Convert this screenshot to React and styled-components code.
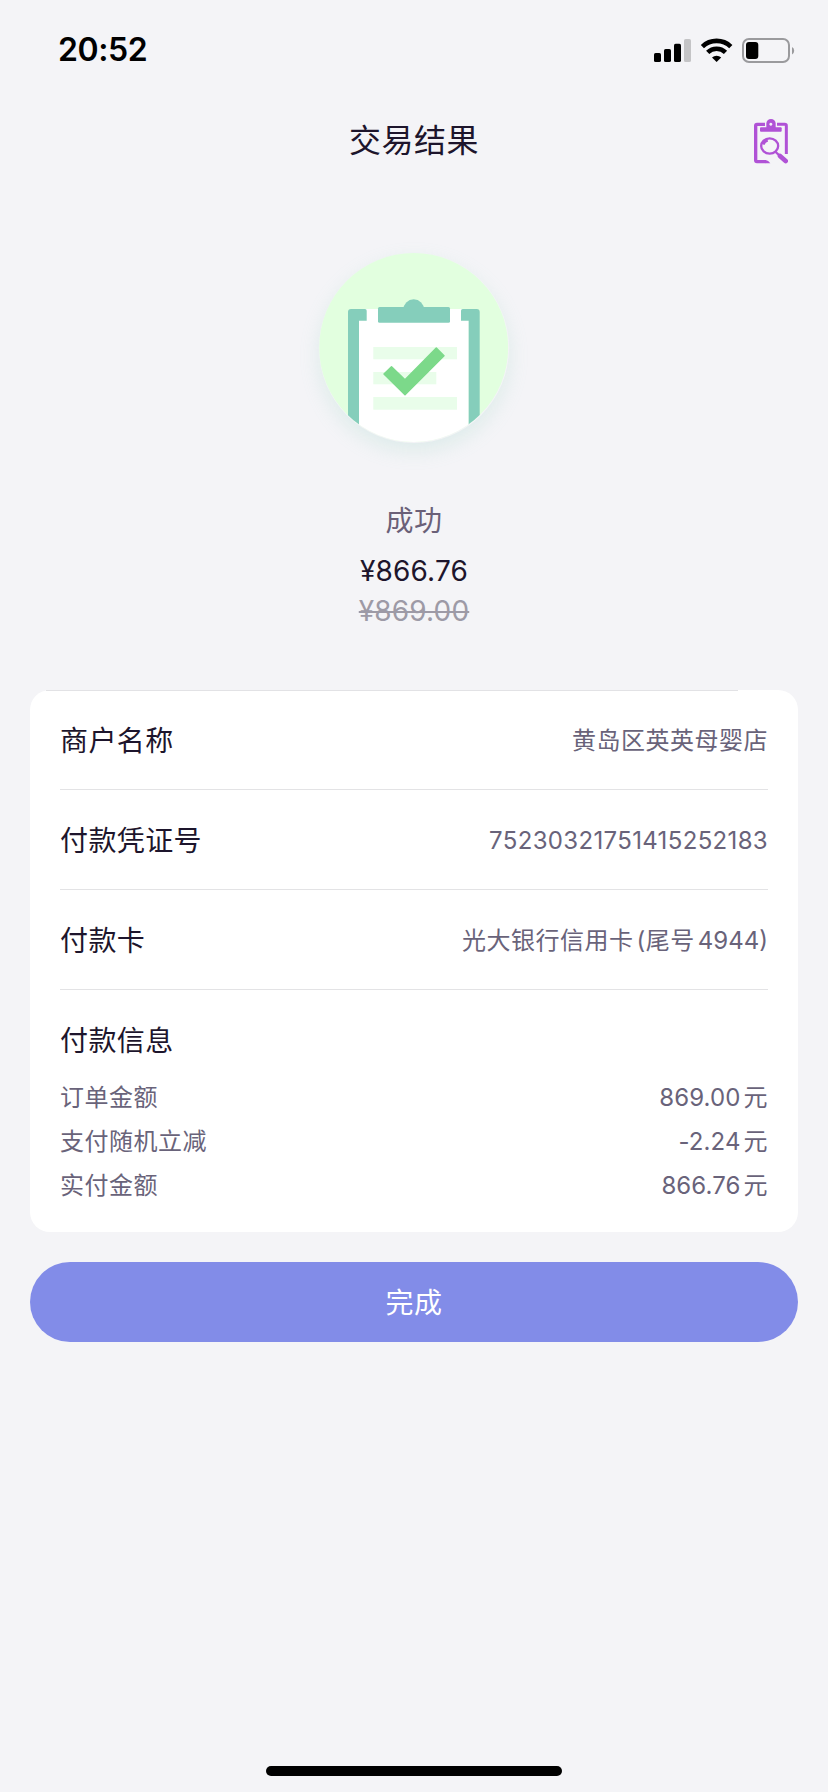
/* eslint-disable react/prop-types */
import styled, { createGlobalStyle } from 'styled-components';

const GlobalStyle = createGlobalStyle`
    body {
        margin: 0;
        background: #f4f4f7;
        font-family: Inter, "Noto Sans CJK SC", sans-serif;
        color: #1d152c;
    }
`;

const Page = styled.div`
    display: flex;
    flex-direction: column;
    width: 828px;
    height: 1792px;
    box-sizing: border-box;
    overflow: hidden;
`;

const StatusBar = styled.header`
    display: flex;
    align-items: center;
    justify-content: space-between;
    height: 99px;
    padding: 0 33px 0 58px;
`;

const Time = styled.span`
    font-size: 32px;
    font-weight: 600;
    line-height: 40px;
    letter-spacing: -0.4px;
    color: #000;
`;

const TitleBar = styled.div`
    display: grid;
    grid-template-columns: 34px 1fr 34px;
    align-items: center;
    height: 84px;
    padding: 0 40px;
`;

const Title = styled.h1`
    grid-column: 2;
    margin: 0;
    font-size: 32px;
    font-weight: 400;
    line-height: 44px;
    letter-spacing: 0.5px;
    text-align: center;
`;

const Summary = styled.section`
    display: flex;
    flex-direction: column;
    align-items: center;
    height: 507px;
`;

const Badge = styled.div`
    width: 190px;
    height: 190px;
    margin-top: 70px;
    border-radius: 50%;
    box-shadow: 0 8px 20px rgba(133, 206, 187, 0.2);
`;

const Status = styled.div`
    margin-top: 58px;
    font-size: 28px;
    line-height: 40px;
    letter-spacing: 0.4px;
    color: #6a6078;
`;

const Amount = styled.div`
    margin-top: ${({ $old }) => ($old ? '0' : '10px')};
    font-size: 28px;
    line-height: 40px;
    letter-spacing: 0.15px;
    ${({ $old }) => $old && `
        color: #9d9aa6;
        text-decoration: line-through;
        text-decoration-thickness: 2px;
    `}
`;

const Card = styled.section`
    position: relative;
    margin: 0 30px;
    height: 542px;
    box-sizing: border-box;
    padding: 0 30px;
    border-radius: 20px;
    background: #fff;
    &::before {
        content: '';
        position: absolute;
        top: 0;
        left: 16px;
        width: 692px;
        height: 1px;
        background: #e2e2e5;
    }
`;

const Row = styled.div`
    display: flex;
    align-items: center;
    justify-content: space-between;
    height: 100px;
    box-sizing: border-box;
    padding-top: 2px;
    ${({ $line }) => $line && 'border-bottom: 1px solid #e3e3e5;'}
`;

const Label = styled.span`
    font-size: 28px;
    line-height: 40px;
    letter-spacing: 0.4px;
`;

const Value = styled.span`
    display: flex;
    gap: 3px;
    font-size: 24px;
    line-height: 34px;
    color: #69637a;
`;

const Part = styled.span`
    letter-spacing: ${({ $spacing }) => $spacing || '0.5px'};
`;

const Detail = styled.div`
    display: flex;
    align-items: center;
    justify-content: space-between;
    height: 44px;
`;

const DetailLabel = styled.span`
    font-size: 24px;
    line-height: 34px;
    letter-spacing: 0.5px;
    color: #69637a;
`;

const Details = styled.div`
    margin-top: -14px;
`;

const DoneButton = styled.button`
    height: 80px;
    margin: 30px 30px 0;
    padding: 0 0 2px;
    border: 0;
    border-radius: 40px;
    background: #828ce8;
    font-family: inherit;
    font-size: 28px;
    letter-spacing: 0.4px;
    color: #fff;
    cursor: pointer;
`;

const HomeBar = styled.div`
    width: 296px;
    height: 10px;
    margin: auto auto 16px;
    border-radius: 5px;
    background: #000;
`;

const rows = [
    { label: '商户名称', value: [{ text: '黄岛区英英母婴店' }] },
    { label: '付款凭证号', value: [{ text: '75230321751415252183', spacing: '0.34px' }] },
    {
        label: '付款卡',
        value: [
            { text: '光大银行信用卡' },
            { text: '(尾号' },
            { text: '4944)', spacing: '0' }
        ]
    }
];

const details = [
    { label: '订单金额', value: '869.00' },
    { label: '支付随机立减', value: '-2.24' },
    { label: '实付金额', value: '866.76' }
];

function StatusIcons() {
    return <svg width='142' height='26' viewBox='652 36 142 26'>
        <rect x='653' y='52' width='7' height='9' rx='1.6' />
        <rect x='663' y='48' width='7' height='13' rx='1.6' />
        <rect x='673' y='42.7' width='7' height='18.3' rx='1.6' />
        <rect x='683' y='38' width='7' height='23' rx='1.6' fill='#c4c4c6' />
        <g fill='none' stroke='#000' strokeWidth='4.6'>
            <path d='M701.4 45.6a20.6 20.6 0 0 1 28.4 0' />
            <path d='M706.7 51.4a12.8 12.8 0 0 1 17.8 0' />
        </g>
        <path d='M711 56.6a6.8 6.8 0 0 1 9.2 0L715.6 61z' />
        <rect x='742' y='38' width='46' height='23' rx='6' fill='none' stroke='#9a9a9d' strokeWidth='2' />
        <rect x='745' y='41' width='12.3' height='17' rx='3' />
        <path d='M791 46a4.2 4.2 0 0 1 0 7.4z' fill='#9a9a9d' />
    </svg>;
}

function RecordIcon() {
    return <svg width='34' height='45' viewBox='0 0 102 135' fill='none' stroke='#b052d6'>
        <path d='M33 16H9q-4 0-4 4V124q0 4 4 4H36' strokeWidth='10' />
        <path d='M35 123q8 1 14 10H35z' fill='#b052d6' stroke='none' />
        <path d='M69 16H92q5 0 5 4V105' strokeWidth='9' />
        <rect x='18' y='25' width='65' height='13' rx='3' fill='#b052d6' stroke='none' />
        <path
            d='M37 27V13a14 13 0 0 1 28 0V27zM50.5 11a4.5 4.5 0 1 0 .1 0z'
            fill='#b052d6'
            fillRule='evenodd'
            stroke='none'
        />
        <ellipse cx='47' cy='81' rx='25.5' ry='23' strokeWidth='7' />
        <path d='M27 76q4-10 14-13' strokeWidth='9' />
        <path d='M65 99L76 109' strokeWidth='7' />
        <path d='M78 111L95 126' strokeWidth='14' strokeLinecap='round' />
    </svg>;
}

function SuccessPicture() {
    return <svg width='190' height='190' viewBox='0 0 190 190'>
        <clipPath id='disc'>
            <circle cx='94.7' cy='94.5' r='94.5' />
        </clipPath>
        <g clipPath='url(#disc)'>
            <rect width='190' height='190' fill='#e2ffdf' />
            <rect x='40' y='56' width='109.7' height='140' fill='#fff' />
            <path d='M29 190V59q0-3 3-3H46q1.7 0 1.7 1.7V67.7H40V190z' fill='#85cebb' />
            <path d='M160.7 190V59q0-3-3-3H143.7q-1.7 0-1.7 1.7V67.7H149.7V190z' fill='#85cebb' />
            <circle cx='94.7' cy='56.8' r='10.5' fill='#85cebb' />
            <rect x='59' y='54' width='72' height='15.7' rx='1.5' fill='#85cebb' />
            <g fill='#e9fdea'>
                <rect x='54.3' y='94' width='83.7' height='12.3' />
                <rect x='54.3' y='119' width='63' height='12.3' />
                <rect x='54.3' y='144' width='83.7' height='12.7' />
            </g>
            <path
                d='M65 121L72.5 113.7L86 126.7L117.3 95L125 102.7L86 141.7z'
                fill='#7cd98a'
                stroke='#7cd98a'
                strokeWidth='1.5'
                strokeLinejoin='round'
            />
        </g>
    </svg>;
}

function App() {
    return <Page>
        <GlobalStyle />
        <StatusBar>
            <Time>20:52</Time>
            <StatusIcons />
        </StatusBar>
        <TitleBar>
            <Title>交易结果</Title>
            <RecordIcon />
        </TitleBar>
        <Summary>
            <Badge>
                <SuccessPicture />
            </Badge>
            <Status>成功</Status>
            <Amount>¥866.76</Amount>
            <Amount $old>¥869.00</Amount>
        </Summary>
        <Card>
            {rows.map(({ label, value }) => <Row key={label} $line>
                <Label>{label}</Label>
                <Value>
                    {value.map(({ text, spacing }) => <Part key={text} $spacing={spacing}>{text}</Part>)}
                </Value>
            </Row>)}
            <Row>
                <Label>付款信息</Label>
            </Row>
            <Details>
                {details.map(({ label, value }) => <Detail key={label}>
                    <DetailLabel>{label}</DetailLabel>
                    <Value>
                        <Part $spacing='0.1px'>{value}</Part>
                        <Part>元</Part>
                    </Value>
                </Detail>)}
            </Details>
        </Card>
        <DoneButton>完成</DoneButton>
        <HomeBar />
    </Page>;
}

export default App;
